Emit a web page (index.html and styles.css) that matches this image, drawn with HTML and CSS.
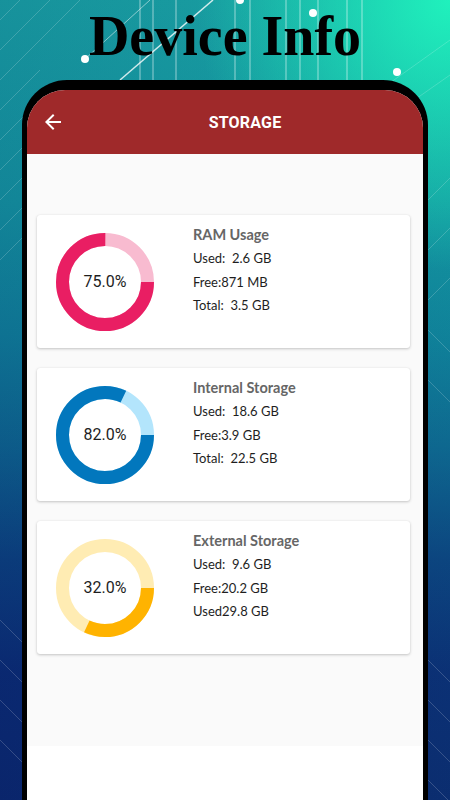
FILE: index.html
```html
<!DOCTYPE html>
<html>
<head>
<meta charset="utf-8">
<link rel="stylesheet" href="styles.css">
</head>
<body>
<div class="page">
  <svg class="bg-art" width="450" height="800" viewBox="0 0 450 800">
    <g stroke="#ffffff" fill="none">
      <g stroke-opacity="0.55" stroke-width="1">
        <path d="M140 0 V80"/><path d="M153 0 V80"/><path d="M176 0 V80"/>
        <path d="M235 0 V80"/><path d="M250 0 V80"/><path d="M286 0 V80"/>
        <path d="M300 0 V80"/><path d="M318 0 V80"/><path d="M347 0 V80"/><path d="M362 0 V80"/>
      </g>
      <path d="M120 80 L213 0" stroke-opacity="0.8" stroke-width="1.5"/>
      <path d="M85 59 L150 0" stroke-opacity="0.5"/>
      <g stroke-opacity="0.18" stroke-width="1">
        <path d="M0 20 L60 -40"/><path d="M0 50 L90 -40"/><path d="M0 80 L110 -30"/>
        <path d="M0 110 L40 70"/><path d="M0 140 L25 115"/><path d="M0 170 L22 148"/>
        <path d="M0 200 L22 178"/><path d="M0 230 L22 208"/><path d="M0 260 L22 238"/>
        <path d="M428 200 L450 178"/><path d="M428 250 L450 228"/><path d="M428 300 L450 278"/>
        <path d="M428 330 L450 352"/><path d="M428 380 L450 402"/>
        <path d="M0 620 L22 642"/><path d="M0 660 L22 682"/><path d="M0 700 L22 722"/><path d="M0 740 L22 762"/>
        <path d="M428 660 L450 682"/><path d="M428 700 L450 722"/><path d="M428 740 L450 762"/><path d="M428 780 L450 802"/>
        <path d="M380 90 L450 40"/><path d="M400 110 L450 75"/>
      </g>
    </g>
    <g fill="#ffffff">
      <circle cx="85" cy="59" r="4"/>
      <circle cx="313" cy="13" r="4"/>
      <circle cx="397" cy="72" r="4"/>
      <circle cx="240" cy="0" r="4"/>
    </g>
  </svg>

  <h1 class="headline">Device Info</h1>

  <div class="phone">
    <div class="screen">
      <div class="toolbar">
        <div class="nav-btn">
          <svg width="24" height="24" viewBox="0 0 24 24"><path fill="#ffffff" d="M20 11H7.83l5.59-5.59L12 4l-8 8 8 8 1.41-1.41L7.83 13H20v-2z"/></svg>
        </div>
        <div class="toolbar-title">STORAGE</div>
      </div>

      <div class="content">
        <div class="card">
          <div class="donut">
            <svg width="98" height="98" viewBox="0 0 98 98">
              <circle cx="49" cy="49" r="42.5" fill="none" stroke="#f8bbd0" stroke-width="13"/>
              <circle cx="49" cy="49" r="42.5" fill="none" stroke="#e91e63" stroke-width="13" stroke-dasharray="200.28 267.04"/>
            </svg>
            <span class="pct">75.0%</span>
          </div>
          <div class="info">
            <div class="info-title">RAM Usage</div>
            <div class="info-line">Used:  2.6 GB</div>
            <div class="info-line">Free:871 MB</div>
            <div class="info-line">Total:  3.5 GB</div>
          </div>
        </div>

        <div class="card">
          <div class="donut">
            <svg width="98" height="98" viewBox="0 0 98 98">
              <circle cx="49" cy="49" r="42.5" fill="none" stroke="#b3e5fc" stroke-width="13"/>
              <circle cx="49" cy="49" r="42.5" fill="none" stroke="#0277bd" stroke-width="13" stroke-dasharray="218.97 267.04"/>
            </svg>
            <span class="pct">82.0%</span>
          </div>
          <div class="info">
            <div class="info-title">Internal Storage</div>
            <div class="info-line">Used:  18.6 GB</div>
            <div class="info-line">Free:3.9 GB</div>
            <div class="info-line">Total:  22.5 GB</div>
          </div>
        </div>

        <div class="card">
          <div class="donut">
            <svg width="98" height="98" viewBox="0 0 98 98">
              <circle cx="49" cy="49" r="42.5" fill="none" stroke="#ffecb3" stroke-width="13"/>
              <circle cx="49" cy="49" r="42.5" fill="none" stroke="#ffb300" stroke-width="13" stroke-dasharray="85.45 267.04"/>
            </svg>
            <span class="pct">32.0%</span>
          </div>
          <div class="info">
            <div class="info-title">External Storage</div>
            <div class="info-line">Used:  9.6 GB</div>
            <div class="info-line">Free:20.2 GB</div>
            <div class="info-line">Used29.8 GB</div>
          </div>
        </div>
      </div>
      <div class="bottom-area"></div>
    </div>
  </div>
</div>
</body>
</html>
```

FILE: styles.css
```css
* { box-sizing: border-box; }

html, body {
  margin: 0;
  padding: 0;
}

body {
  width: 450px;
  height: 800px;
  overflow: hidden;
}

.page {
  position: relative;
  width: 450px;
  height: 800px;
  overflow: hidden;
  background:
    radial-gradient(ellipse 75% 45% at 100% 0%, rgba(32, 245, 190, 0.95), rgba(32, 245, 190, 0) 75%),
    linear-gradient(to right, rgba(10, 90, 130, 0.2), rgba(20, 200, 180, 0.12)),
    linear-gradient(to bottom, #1aa0a2 0%, #14909d 25%, #0f7896 42%, #0d5a8a 56%, #0b3378 70%, #0a1c6c 84%, #0a1866 100%);
}

.bg-art {
  position: absolute;
  left: 0;
  top: 0;
}

.headline {
  position: relative;
  margin: 0;
  height: 80px;
  padding-top: 8px;
  text-align: center;
  font-family: "Liberation Serif", "Times New Roman", serif;
  font-weight: bold;
  font-size: 56px;
  line-height: 56px;
  color: #000;
}

.phone {
  position: relative;
  margin-left: 22px;
  width: 406px;
  height: 740px;
  background: #000;
  border-style: solid;
  border-color: #000;
  border-width: 10px 5px 0 5px;
  border-radius: 45px 45px 0 0;
}

.screen {
  height: 100%;
  border-radius: 38px 38px 0 0;
  overflow: hidden;
  background: #ffffff;
  display: flex;
  flex-direction: column;
}

.toolbar {
  height: 64px;
  flex: none;
  background: #9f292a;
  display: flex;
  align-items: center;
}

.nav-btn {
  width: 56px;
  padding-left: 14px;
  display: flex;
  align-items: center;
}

.nav-btn svg { display: block; }

.toolbar-title {
  flex: 1;
  padding-right: 16px;
  text-align: center;
  color: #fff;
  font-family: Roboto, "Noto Sans", sans-serif;
  font-weight: bold;
  font-size: 16px;
  letter-spacing: 0.2px;
}

.content {
  height: 592px;
  flex: none;
  background: #fafafa;
  padding: 61px 13px 0 10px;
  display: flex;
  flex-direction: column;
  gap: 20px;
}

.bottom-area {
  flex: 1;
  background: #ffffff;
}

.card {
  height: 133px;
  background: #fff;
  border-radius: 3px;
  box-shadow: 0 1px 3px rgba(0, 0, 0, 0.22), 0 0 1px rgba(0, 0, 0, 0.08);
  display: flex;
  align-items: center;
  padding-left: 19px;
  gap: 39px;
}

.donut {
  position: relative;
  width: 98px;
  height: 98px;
  flex: none;
  display: flex;
  align-items: center;
  justify-content: center;
}

.donut svg {
  position: absolute;
  left: 0;
  top: 0;
}

.pct {
  position: relative;
  font-family: Roboto, "Noto Sans", sans-serif;
  font-size: 16px;
  color: #1e1e1e;
}

.info {
  align-self: flex-start;
  padding-top: 8px;
  font-family: Lato, "Noto Sans", sans-serif;
}

.info-title {
  font-weight: bold;
  font-size: 14.5px;
  line-height: 24px;
  color: #666666;
}

.info-line {
  font-size: 13px;
  line-height: 23.5px;
  color: #1e1e1e;
  white-space: pre;
}
```
